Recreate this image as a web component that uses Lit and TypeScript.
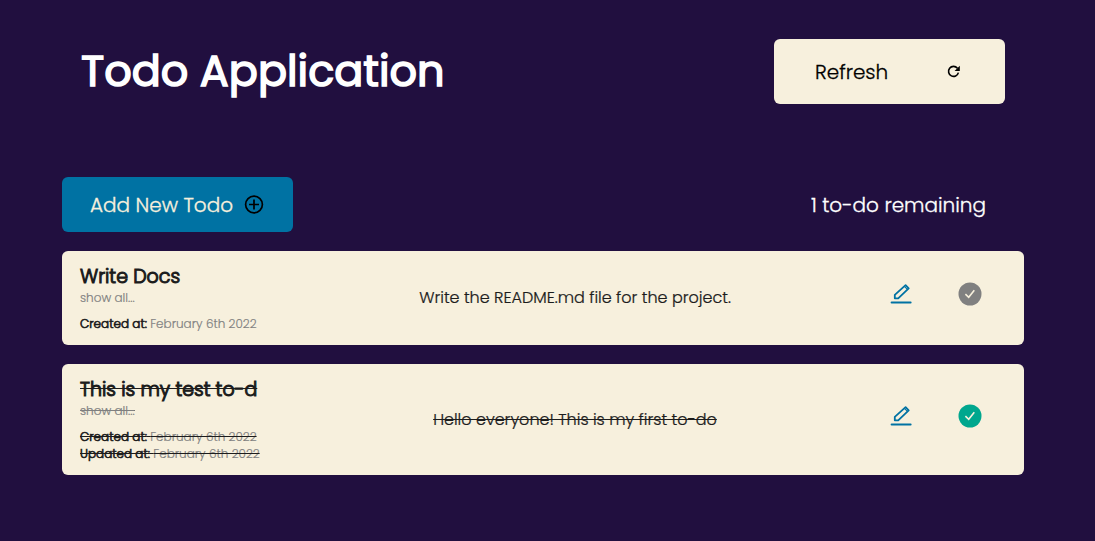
import { LitElement, html, css } from "lit";
import { customElement, property, state } from "lit/decorators.js";
import { classMap } from "lit/directives/class-map.js";

interface Todo {
  title: string;
  text: string;
  created: string;
  updated?: string;
  done: boolean;
}

const shared = css`
  * {
    box-sizing: border-box;
  }
  button {
    font: inherit;
    border: 0;
    margin: 0;
    cursor: pointer;
  }
  svg {
    display: block;
    flex: none;
  }
  .plain {
    -webkit-text-stroke: 0.015em currentColor;
  }
  .strong {
    font-weight: 300;
    -webkit-text-stroke: 0.055em currentColor;
  }
`;

@customElement("todo-card")
export class TodoCard extends LitElement {
  @property({ attribute: false }) todo!: Todo;

  static styles = [
    shared,
    css`
      :host {
        display: block;
      }
      .card {
        display: grid;
        grid-template-columns: 200px 1fr 112px;
        align-items: center;
        padding: 12px 42px 13px 18px;
        border-radius: 6px;
        background: #f7f0dd;
        color: #1c1c1c;
      }
      .done .info,
      .done .text,
      .done .more {
        text-decoration: line-through;
      }
      .title {
        margin: 0;
        font-size: 19px;
        line-height: 27px;
        white-space: nowrap;
      }
      .more {
        display: block;
        padding: 0;
        margin-bottom: 9px;
        background: none;
        color: #808080;
        font-size: 12px;
        line-height: 16px;
      }
      .meta {
        margin: 0;
        font-size: 12px;
        line-height: 17px;
        color: #808080;
        white-space: nowrap;
      }
      .meta b {
        color: #1c1c1c;
      }
      .text {
        margin: 0;
        font-size: 16px;
        line-height: 25px;
        text-align: center;
      }
      .actions {
        display: flex;
        justify-content: flex-end;
        align-items: center;
        gap: 46px;
        padding-bottom: 7px;
      }
      .icon {
        padding: 0;
        background: none;
        color: #0072a3;
      }
      .check {
        color: #808080;
      }
      .done .check {
        color: #00a78e;
      }
    `,
  ];

  private toggle() {
    this.dispatchEvent(new CustomEvent("toggle"));
  }

  render() {
    const t = this.todo;
    return html`
      <article class=${classMap({ card: true, done: t.done })}>
        <div class="info">
          <h2 class="title strong">${t.title}</h2>
          <button class="more plain">show all...</button>
          <p class="meta plain"><b class="strong">Created at:</b> ${t.created}</p>
          ${t.updated
            ? html`<p class="meta plain"><b class="strong">Updated at:</b> ${t.updated}</p>`
            : null}
        </div>
        <p class="text plain">${t.text}</p>
        <div class="actions">
          <button class="icon" aria-label="Edit">
            <svg width="22" height="22" viewBox="0 0 22 22" fill="none" stroke="currentColor">
              <path d="M15.6 2.2 18.7 5.3 8.2 15.3H4.8V11.9Z" stroke-width="1.8" stroke-linejoin="round" />
              <path d="M14.4 3.4 17.4 6.4" stroke-width="1.2" />
              <path d="M1.6 19.4H20.6" stroke-width="2" stroke-linecap="round" />
            </svg>
          </button>
          <button class="icon check" aria-label="Toggle done" @click=${this.toggle}>
            <svg width="24" height="24" viewBox="0 0 24 24" fill="none">
              <circle cx="12" cy="12" r="11.5" fill="currentColor" />
              <path d="M7.4 12.2 10.7 15.3 16.3 8.3" stroke="#f7f0dd" stroke-width="1.6" />
            </svg>
          </button>
        </div>
      </article>
    `;
  }
}

@customElement("app-root")
export class AppRoot extends LitElement {
  @state() private todos: Todo[] = [
    {
      title: "Write Docs",
      text: "Write the README.md file for the project.",
      created: "February 6th 2022",
      done: false,
    },
    {
      title: "This is my test to-d",
      text: "Hello everyone! This is my first to-do",
      created: "February 6th 2022",
      updated: "February 6th 2022",
      done: true,
    },
  ];

  static styles = [
    shared,
    css`
      :host {
        display: block;
        min-height: 100vh;
        background: #210f3f;
        color: #ffffff;
        font-family: Poppins, Inter, "Open Sans", sans-serif;
        font-size: 20px;
        font-weight: 300;
        line-height: 30px;
      }
      .page {
        padding: 39px 71px 39px 62px;
      }
      .row {
        display: flex;
        align-items: center;
        justify-content: space-between;
      }
      .header {
        padding: 0 19px;
        margin-bottom: 73px;
      }
      .heading {
        margin: 0;
        font-size: 43px;
        font-weight: 400;
        line-height: 65px;
        -webkit-text-stroke: 0.035em currentColor;
      }
      .btn {
        display: flex;
        align-items: center;
        justify-content: space-between;
        width: 231px;
        border-radius: 6px;
      }
      .refresh {
        height: 65px;
        padding: 0 44px 0 41px;
        background: #f7f0dd;
        color: #000000;
      }
      .add {
        height: 55px;
        padding: 0 29px 0 28px;
        background: #0072a3;
        color: #f7f0dd;
      }
      .add svg {
        color: #000000;
      }
      .toolbar {
        padding-right: 38px;
      }
      .list {
        display: grid;
        gap: 19px;
        margin-top: 19px;
      }
    `,
  ];

  private toggle(index: number) {
    this.todos = this.todos.map((t, i) => (i === index ? { ...t, done: !t.done } : t));
  }

  render() {
    const left = this.todos.filter((t) => !t.done).length;
    return html`
      <main class="page">
        <header class="row header">
          <h1 class="heading">Todo Application</h1>
          <button class="btn refresh plain">
            Refresh
            <svg width="14" height="14" viewBox="0 0 14 14" fill="none" stroke="#000">
              <path d="M10.4 3.2A5 5 0 1 0 11.4 7.6" stroke-width="1.6" />
              <path d="M12.8 0.8V6H7.6Z" fill="#000" stroke="none" />
            </svg>
          </button>
        </header>
        <div class="row toolbar">
          <button class="btn add plain">
            Add New Todo
            <svg width="20" height="20" viewBox="0 0 20 20" fill="none" stroke="currentColor">
              <circle cx="10" cy="9.5" r="8.4" stroke-width="1.7" />
              <path d="M10 4.5V14.5M5 9.5H15" stroke-width="1.7" />
            </svg>
          </button>
          <span class="plain">${left} to-do remaining</span>
        </div>
        <section class="list">
          ${this.todos.map(
            (t, i) => html`<todo-card .todo=${t} @toggle=${() => this.toggle(i)}></todo-card>`
          )}
        </section>
      </main>
    `;
  }
}
